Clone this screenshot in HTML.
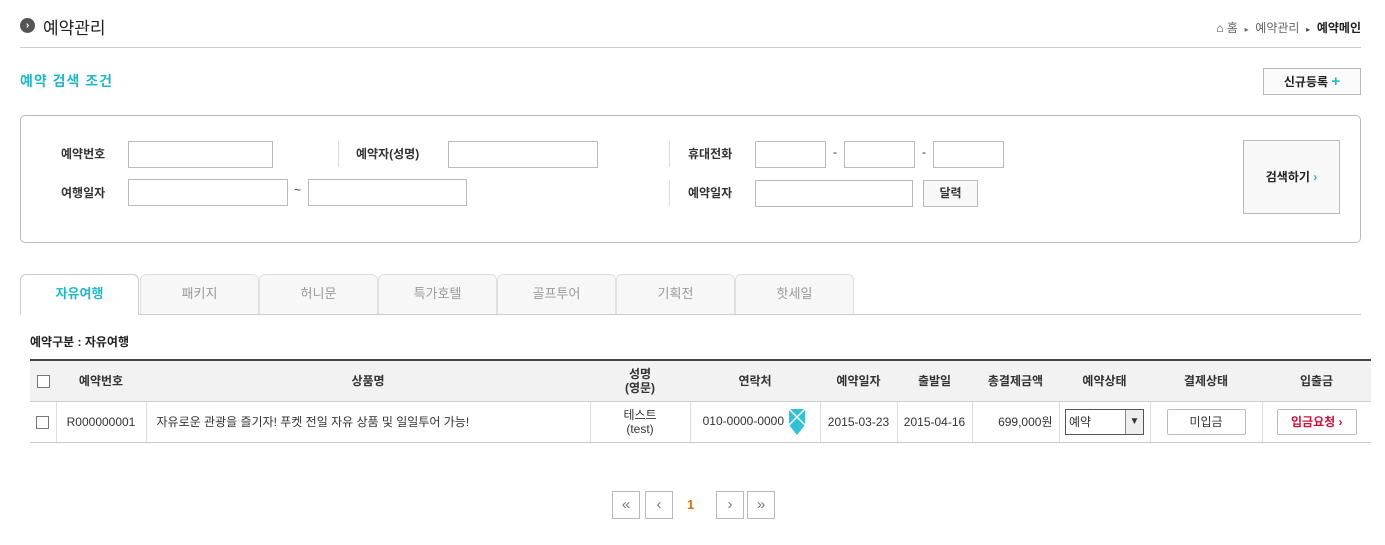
<!DOCTYPE html>
<html><head><meta charset="utf-8"><style>
*{box-sizing:border-box;margin:0;padding:0}
body{width:1385px;height:545px;background:#fff;font-family:"Liberation Sans","Noto Sans CJK KR","NanumGothic",sans-serif;font-size:12px;color:#333;position:relative;overflow:hidden}
.a{position:absolute}
.inp{position:absolute;border:1px solid #bbb;background:#fff;height:27px}
.lbl{position:absolute;font-weight:bold;font-size:12px;color:#333}
.tab{position:absolute;top:274px;height:41px;width:119px;border:1px solid #e0e0e0;border-bottom:1px solid #ccc;border-radius:6px 6px 0 0;background:#f7f7f7;color:#999;text-align:center;line-height:38px;font-size:13px}
table{position:absolute;left:30px;top:359px;width:1341px;border-collapse:collapse;border-top:2px solid #444}
th{background:#f2f2f2;height:41px;font-size:12px;color:#333;border-bottom:1px solid #ccc;font-weight:bold;line-height:14px}
td{height:41px;border-bottom:1px solid #ccc;border-left:1px solid #ddd;text-align:center;font-size:12px;color:#333}
td:first-child{border-left:none}
.cb{display:inline-block;width:13px;height:13px;border:1px solid #777;background:#fff;vertical-align:middle}
.pg{position:absolute;top:491px;width:28px;height:28px;border:1px solid #bbb;color:#777;text-align:center;line-height:25px;font-size:15px}
</style></head><body>
<div class="a" style="left:20px;top:18px;width:15px;height:15px;border-radius:50%;background:#555;color:#fff;font-size:10px;line-height:15px;text-align:center;font-weight:bold">›</div>
<div class="a" style="left:43px;top:14px;font-size:17px;color:#222">예약관리</div>
<div class="a" style="right:24px;top:19px;font-size:12px;color:#666;white-space:nowrap"><span style="color:#444">⌂</span> 홈 &nbsp;<span style="font-size:8px">▸</span>&nbsp; 예약관리 &nbsp;<span style="font-size:8px;color:#444">▸</span>&nbsp; <b style="color:#222">예약메인</b></div>
<div class="a" style="left:20px;top:47px;width:1341px;height:1px;background:#ccc"></div>
<div class="a" style="left:20px;top:71px;font-size:14px;font-weight:bold;color:#1fb8c8;letter-spacing:1px">예약 검색 조건</div>
<div class="a" style="left:1263px;top:68px;width:98px;height:27px;border:1px solid #bbb;background:#fafafa;text-align:center;line-height:25px;font-weight:bold;font-size:12px;color:#222">신규등록 <span style="color:#1fb8c8;font-size:15px">+</span></div>

<div class="a" style="left:20px;top:115px;width:1341px;height:128px;border:1px solid #bbb;border-radius:5px"></div>
<div class="lbl" style="left:61px;top:145px">예약번호</div>
<div class="inp" style="left:128px;top:141px;width:145px"></div>
<div class="a" style="left:338px;top:141px;width:1px;height:26px;background:#ddd"></div>
<div class="lbl" style="left:356px;top:145px">예약자(성명)</div>
<div class="inp" style="left:448px;top:141px;width:150px"></div>
<div class="a" style="left:669px;top:141px;width:1px;height:26px;background:#ddd"></div>
<div class="lbl" style="left:688px;top:145px">휴대전화</div>
<div class="inp" style="left:755px;top:141px;width:71px"></div>
<div class="a" style="left:833px;top:145px">-</div>
<div class="inp" style="left:844px;top:141px;width:71px"></div>
<div class="a" style="left:922px;top:145px">-</div>
<div class="inp" style="left:933px;top:141px;width:71px"></div>
<div class="lbl" style="left:61px;top:184px">여행일자</div>
<div class="inp" style="left:128px;top:179px;width:160px"></div>
<div class="a" style="left:294px;top:183px">~</div>
<div class="inp" style="left:308px;top:179px;width:159px"></div>
<div class="a" style="left:669px;top:180px;width:1px;height:26px;background:#ddd"></div>
<div class="lbl" style="left:688px;top:184px">예약일자</div>
<div class="inp" style="left:755px;top:180px;width:158px"></div>
<div class="a" style="left:923px;top:180px;width:55px;height:27px;border:1px solid #bbb;background:#f8f8f8;text-align:center;line-height:25px;font-weight:bold;color:#333">달력</div>
<div class="a" style="left:1243px;top:140px;width:97px;height:74px;border:1px solid #bbb;background:#f8f8f8;text-align:center;line-height:72px;font-weight:bold;color:#222">검색하기 <span style="color:#1fb8c8">›</span></div>

<div class="tab" style="left:20px;background:#fff;color:#1fb8c8;font-weight:bold;border-color:#ccc;border-bottom-color:#fff;z-index:2">자유여행</div>
<div class="tab" style="left:140px">패키지</div>
<div class="tab" style="left:259px">허니문</div>
<div class="tab" style="left:378px">특가호텔</div>
<div class="tab" style="left:497px">골프투어</div>
<div class="tab" style="left:616px">기획전</div>
<div class="tab" style="left:735px">핫세일</div>
<div class="a" style="left:20px;top:314px;width:1341px;height:1px;background:#ccc"></div>
<div class="a" style="left:30px;top:333px;font-weight:bold;color:#222">예약구분 : 자유여행</div>

<table>
<tr><th style="width:26px"><span class="cb"></span></th><th style="width:90px">예약번호</th><th style="width:444px">상품명</th><th style="width:100px">성명<br>(영문)</th><th style="width:130px">연락처</th><th style="width:77px">예약일자</th><th style="width:75px">출발일</th><th style="width:87px">총결제금액</th><th style="width:91px">예약상태</th><th style="width:112px">결제상태</th><th>입출금</th></tr>
<tr><td><span class="cb"></span></td><td>R000000001</td><td style="text-align:left;padding-left:10px">자유로운 관광을 즐기자! 푸켓 전일 자유 상품 및 일일투어 가능!</td><td style="line-height:14px">테스트<br>(test)</td><td>010-0000-0000 <svg width="20" height="28" viewBox="0 0 20 28" style="vertical-align:middle"><path d="M2 1h16v16l-8 10-8-10z" fill="#2ec4d6"/><path d="M2 1l16 16M18 1L2 17" stroke="#fff" stroke-width="1.5"/></svg></td><td>2015-03-23</td><td>2015-04-16</td><td style="text-align:right;padding-right:6px">699,000원</td><td><div style="margin:0 auto;width:79px;height:26px;border:1px solid #555;text-align:left;position:relative;line-height:24px;padding-left:3px">예약<span style="position:absolute;right:0;top:0;width:18px;height:24px;border-left:1px solid #888;background:#eee;text-align:center;font-size:10px">▼</span></div></td><td><div style="margin:0 auto;width:79px;height:26px;border:1px solid #bbb;border-radius:2px;line-height:24px">미입금</div></td><td><div style="margin:0 auto;width:80px;height:26px;border:1px solid #bbb;border-radius:2px;line-height:24px;color:#d0103a;font-weight:bold">입금요청 ›</div></td></tr>
</table>

<div class="pg" style="left:612px">«</div>
<div class="pg" style="left:645px">‹</div>
<div class="a" style="left:687px;top:497px;color:#e07010;font-weight:bold;font-size:13px">1</div>
<div class="pg" style="left:716px">›</div>
<div class="pg" style="left:747px">»</div>
</body></html>
